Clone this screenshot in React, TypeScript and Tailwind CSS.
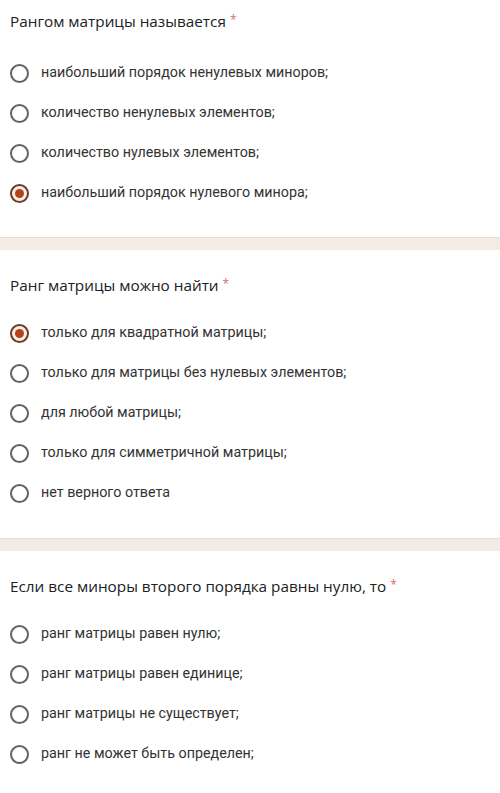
const questions = [
  {
    title: "Рангом матрицы называется",
    options: [
      "наибольший порядок ненулевых миноров;",
      "количество ненулевых элементов;",
      "количество нулевых элементов;",
      "наибольший порядок нулевого минора;",
    ],
    selected: 3,
  },
  {
    title: "Ранг матрицы можно найти",
    options: [
      "только для квадратной матрицы;",
      "только для матрицы без нулевых элементов;",
      "для любой матрицы;",
      "только для симметричной матрицы;",
      "нет верного ответа",
    ],
    selected: 0,
  },
  {
    title: "Если все миноры второго порядка равны нулю, то",
    options: [
      "ранг матрицы равен нулю;",
      "ранг матрицы равен единице;",
      "ранг матрицы не существует;",
      "ранг не может быть определен;",
    ],
    selected: -1,
  },
];

function Radio({ checked }: { checked: boolean }) {
  if (checked) {
    return (
      <span className="flex h-[19px] w-[19px] shrink-0 items-center justify-center rounded-full border-2 border-[#6e3a2a] bg-[#fbf1e6]">
        <span className="h-[9px] w-[9px] rounded-full bg-[#b5411e]" />
      </span>
    );
  }
  return <span className="h-[19px] w-[19px] shrink-0 rounded-full border-2 border-[#5f6368]" />;
}

export default function App() {
  return (
    <div className="w-[500px] bg-white font-['Roboto','Liberation_Sans',sans-serif]">
      {questions.map((q, qi) => (
        <div key={q.title}>
          {qi > 0 && (
            <div className="h-[13px] border-t border-[#e6ddd4] bg-[#f4ece4]" />
          )}
          <section className={qi === 0 ? "pt-[11px] pb-[24px]" : "pt-[25px] pb-[25px]"}>
            <h2 className="flex h-[20px] items-center pl-[10px] font-['Open_Sans','Liberation_Sans',sans-serif] text-[15.3px] text-[#202124]">
              {q.title}
              <span className="ml-[4px] -mt-[2px] text-[12px] text-[#e06b6b]">*</span>
            </h2>
            <div className={qi === 0 ? "mt-[22px]" : "mt-[18px]"}>
              {q.options.map((o, oi) => (
                <div key={o} className="flex h-[40px] items-center gap-[12px] pl-[10px]">
                  <Radio checked={oi === q.selected} />
                  <span className="text-[14.3px] text-[#333333]">{o}</span>
                </div>
              ))}
            </div>
          </section>
        </div>
      ))}
    </div>
  );
}
